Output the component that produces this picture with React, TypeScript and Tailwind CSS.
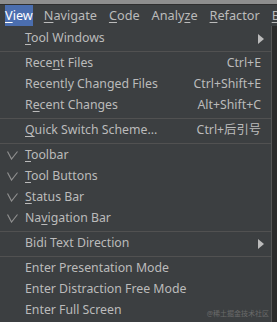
import React from "react";

type Item =
  | { sep: true }
  | {
      sep?: false;
      label: React.ReactNode;
      shortcut?: string;
      sub?: boolean;
      checked?: boolean;
    };

const U = ({ c }: { c: string }) => <span className="underline underline-offset-2">{c}</span>;

const items: Item[] = [
  { label: <><U c="T" />ool Windows</>, sub: true },
  { sep: true },
  { label: <>Rece<U c="n" />t Files</>, shortcut: "Ctrl+E" },
  { label: "Recently Changed Files", shortcut: "Ctrl+Shift+E" },
  { label: <>R<U c="e" />cent Changes</>, shortcut: "Alt+Shift+C" },
  { sep: true },
  { label: <><U c="Q" />uick Switch Scheme...</>, shortcut: "Ctrl+后引号" },
  { sep: true },
  { label: <><U c="T" />oolbar</>, checked: true },
  { label: <><U c="T" />ool Buttons</>, checked: true },
  { label: <><U c="S" />tatus Bar</>, checked: true },
  { label: <>Na<U c="v" />igation Bar</>, checked: true },
  { sep: true },
  { label: "Bidi Text Direction", sub: true },
  { sep: true },
  { label: "Enter Presentation Mode" },
  { label: "Enter Distraction Free Mode" },
  { label: "Enter Full Screen" },
];

const Check = () => (
  <svg width="11" height="9" viewBox="0 0 11 9" className="text-[#8f8f8f]">
    <path d="M0.5 0.5 L4.5 8 L10.5 0.5" fill="none" stroke="currentColor" strokeWidth="1.2" />
  </svg>
);

export default function App() {
  return (
    <div
      className="w-[277px] h-[322px] overflow-hidden bg-[#2b2b2b] text-[12.7px] text-[#bbbbbb] relative"
      style={{ fontFamily: '"Noto Sans", "Noto Sans CJK SC", sans-serif' }}
    >
      <div className="h-[5px] bg-[#8e8e8e] border-b border-[#2f2f2f]" />
      <div className="h-[21px] bg-[#3c3f41] flex items-center whitespace-nowrap">
        <div className="ml-[5px] h-full w-[33px] bg-[#4b6eaf] text-[#ffffff] flex items-center justify-center">
          <span><U c="V" />iew</span>
        </div>
        <div className="ml-[11px]"><U c="N" />avigate</div>
        <div className="ml-[12px]"><U c="C" />ode</div>
        <div className="ml-[12px]">Analy<U c="z" />e</div>
        <div className="ml-[12px]"><U c="R" />efactor</div>
        <div className="ml-[12px]"><U c="B" />uild</div>
      </div>
      <div className="w-[272px] h-[296px] bg-[#3c3f41] border-r border-[#555555] flex flex-col pt-[2px] text-[12.3px]">
        {items.map((it, i) =>
          it.sep ? (
            <div key={i} className="h-[4px] flex items-center">
              <div className="w-full h-px bg-[#515151]" />
            </div>
          ) : (
            <div key={i} className="h-[21px] flex items-center pr-[10px]">
              <div className="w-[25px] flex pl-[7px]">{it.checked && <Check />}</div>
              <div className="flex-1 whitespace-nowrap">{it.label}</div>
              {it.shortcut && <div className="whitespace-nowrap">{it.shortcut}</div>}
              {it.sub && (
                <svg width="6" height="10" viewBox="0 0 6 10" className="-mr-[3px]">
                  <path d="M0 0 L6 5 L0 10 Z" fill="#bbbbbb" />
                </svg>
              )}
            </div>
          )
        )}
      </div>
      <div className="absolute right-[8px] bottom-[3px] text-[7px] text-[#6a6a6a]">@稀土掘金技术社区</div>
    </div>
  );
}
